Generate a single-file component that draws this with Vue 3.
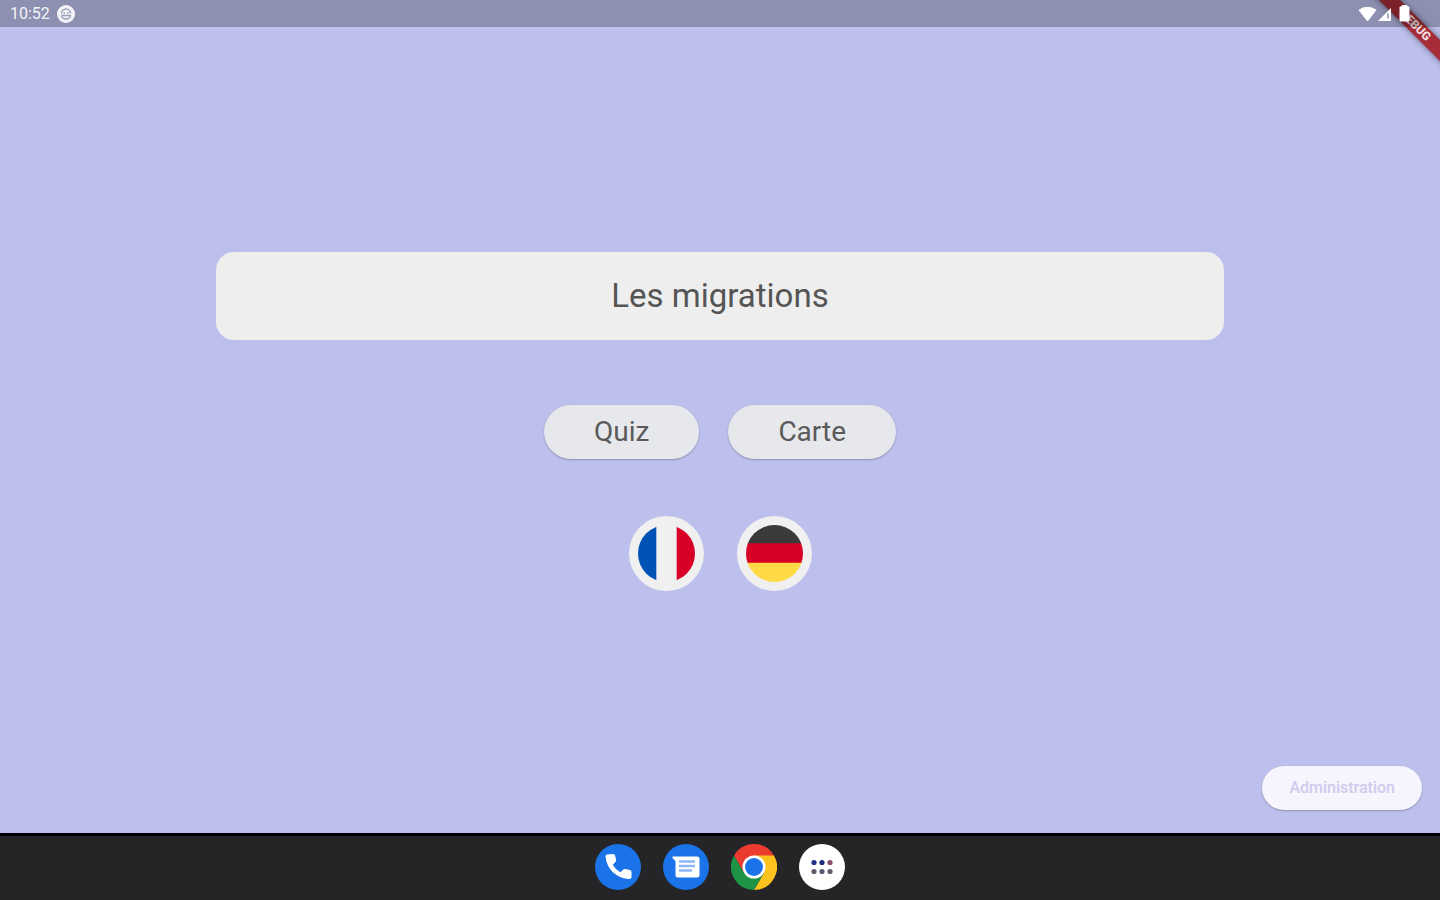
<template>
    <div class="screen">
        <header class="status-bar">
            <div class="status-group">
                <span class="clock">10:52</span>
                <svg class="face" viewBox="0 0 18 18" aria-hidden="true">
                    <circle cx="9" cy="9" r="9" fill="#f4f4f8" />
                    <path d="M4.5 8.5a4.5 4.5 0 0 1 9 0M4.5 10.5h9a4.5 3.5 0 0 1-9 0" fill="none" stroke="#9b9dbb" stroke-width="1.4" />
                    <path d="M6.5 8h1.5M10 8h1.5" stroke="#9b9dbb" stroke-width="1.4" />
                </svg>
            </div>
            <svg class="signals" viewBox="0 0 54 20" aria-hidden="true">
                <path d="M1 6Q9.500 .5 18 6L9.500 17z" fill="#fff" stroke="#fff" stroke-linejoin="round" />
                <path d="M20 17L33 4v13z" fill="#fff" />
                <path d="M30 9.500v5" stroke="#8e90b2" stroke-width="1.5" />
                <path d="M42 3h2V1.500h5V3h2v14h-9z" fill="#fff" stroke="#fff" stroke-linejoin="round" />
            </svg>
        </header>
        <div class="banner"><span>DEBUG</span></div>

        <main class="home">
            <h1 class="title">Les migrations</h1>
            <nav class="actions">
                <button v-for="action in actions" :key="action" type="button" class="action">{{ action }}</button>
            </nav>
            <div class="languages">
                <button type="button" class="flag" aria-label="Français" @click="lang = 'fr'">
                    <svg viewBox="0 0 56 56">
                        <clipPath id="round-fr"><circle cx="28" cy="28" r="28" /></clipPath>
                        <g clip-path="url(#round-fr)">
                            <path d="M0 0h56v56H0z" fill="#f0f0f0" />
                            <path d="M0 0h18v56H0z" fill="#0052b4" />
                            <path d="M38 0h18v56H38z" fill="#d80027" />
                        </g>
                    </svg>
                </button>
                <button type="button" class="flag" aria-label="Deutsch" @click="lang = 'de'">
                    <svg viewBox="0 0 56 56">
                        <clipPath id="round-de"><circle cx="28" cy="28" r="28" /></clipPath>
                        <g clip-path="url(#round-de)">
                            <path d="M0 0h56v19H0z" fill="#3a3a3a" />
                            <path d="M0 18h56v20H0z" fill="#d80027" />
                            <path d="M0 37h56v19H0z" fill="#ffda44" />
                        </g>
                    </svg>
                </button>
            </div>
            <button type="button" class="admin">Administration</button>
        </main>

        <footer class="dock">
            <button type="button" class="app" aria-label="Phone">
                <svg viewBox="0 0 46 46">
                    <circle cx="23" cy="23" r="23" fill="#1a73e8" />
                    <path d="M12 10.500q-1.500 0-1.500 2C11.500 24.500 21 34 33 35q3.500 0 3.500-2v-5q0-1.500-1.500-2l-5-1q-1.200-.2-2 .7l-2.600 2.600q-5-2.600-7.600-7.600l2.600-2.600q1-.9.7-2l-1-4.500q-.4-1.600-2-1.600z" fill="#fff" />
                </svg>
            </button>
            <button type="button" class="app" aria-label="Messages">
                <svg viewBox="0 0 46 46">
                    <circle cx="23" cy="23" r="23" fill="#1a73e8" />
                    <path d="M10 12.500h24q2.500 0 2.500 2.500v16q0 2.500-2.500 2.500H15q-2.500 0-2.500-2.500V17l-3-3q-.5-1.500.5-1.500z" fill="#fff" />
                    <path d="M16 17.500h16M16 22h16M16 26.500h13" stroke="#8fb6f2" stroke-width="2.600" />
                </svg>
            </button>
            <button type="button" class="app" aria-label="Chrome">
                <svg viewBox="0 0 46 46">
                    <path d="M23 23L3.080 11.500A23 23 0 0 1 42.920 11.500z" fill="#ea3b2e" />
                    <path d="M23 11.500h19.920A23 23 0 0 1 23 46l10-17.300z" fill="#fcc31e" />
                    <path d="M3.080 11.500A23 23 0 0 0 23 46l10-17.300-10 3-10-3z" fill="#1e9447" />
                    <path d="M3.080 11.500h39.840H23L13 28.700z" fill="#ea3b2e" />
                    <circle cx="23" cy="23" r="11.500" fill="#fff" />
                    <circle cx="23" cy="23" r="9" fill="#1a73e8" />
                </svg>
            </button>
            <button type="button" class="app" aria-label="Apps">
                <svg viewBox="0 0 46 46">
                    <circle cx="23" cy="23" r="23" fill="#fff" />
                    <circle v-for="dot in dots" :key="dot.color + dot.x" :cx="dot.x" :cy="dot.y" r="2.600" :fill="dot.color" />
                </svg>
            </button>
        </footer>
    </div>
</template>

<script setup>
import { ref } from 'vue'

const lang = ref('fr')
const actions = ['Quiz', 'Carte']

const dots = [
    { x: 15, y: 18.5, color: '#1f2f86' },
    { x: 23, y: 18.5, color: '#1c2a80' },
    { x: 31, y: 18.5, color: '#8c4a6c' },
    { x: 15, y: 27.5, color: '#5d5b6c' },
    { x: 23, y: 27.5, color: '#5a5a70' },
    { x: 31, y: 27.5, color: '#625d6d' }
]
</script>

<style>
body {
    margin: 0;
}
</style>

<style scoped>
.screen {
    position: relative;
    display: flex;
    flex-direction: column;
    min-height: 100vh;
    overflow: hidden;
    background: #bdc0ed;
    font-family: Roboto, "Liberation Sans", sans-serif;
}

button {
    border: 0;
    padding: 0;
    font-family: inherit;
    cursor: pointer;
}

svg {
    display: block;
}

/* translucent, so the banner shows through it */
.status-bar {
    position: relative;
    z-index: 2;
    display: flex;
    align-items: center;
    justify-content: space-between;
    height: 27px;
    padding: 0 28px 0 10px;
    background: rgba(0, 0, 0, 0.25);
}

.status-group {
    display: flex;
    align-items: center;
    gap: 7px;
}

.clock {
    font-size: 16px;
    line-height: 20px;
    color: #f4f4f8;
}

.face {
    width: 18px;
    height: 18px;
}

.signals {
    width: 54px;
    height: 20px;
}

.banner {
    position: absolute;
    z-index: 1;
    top: 18px;
    right: -30px;
    width: 110px;
    height: 15px;
    transform: rotate(45deg);
    background: #a52c38;
    box-shadow: 0 0 6px rgba(0, 0, 0, 0.5);
    color: #f2dcdf;
    font-size: 12px;
    font-weight: 900;
    line-height: 15px;
    text-align: center;
}

.home {
    position: relative;
    flex: 1;
    display: flex;
    flex-direction: column;
    align-items: center;
    justify-content: center;
    padding-bottom: 18px;
}

.title {
    width: 70%;
    margin: 0 0 65px;
    padding: 24px 0;
    border-radius: 18px;
    background: #eee;
    color: #555;
    font-size: 33px;
    font-weight: 400;
    line-height: 40px;
    text-align: center;
}

.actions {
    display: flex;
    gap: 29px;
    margin-bottom: 57px;
}

.action {
    padding: 7px 50px;
    border-radius: 27px;
    background: #e6e8ec;
    box-shadow: 0 1px 2px rgba(0, 0, 0, 0.25);
    color: #5a5a5a;
    font-size: 28px;
    font-weight: 400;
    line-height: 40px;
}

.languages {
    display: flex;
    gap: 33px;
}

.flag {
    padding: 9px;
    border-radius: 50%;
    background: #f0f0f0;
}

.flag svg {
    width: 57px;
    height: 57px;
}

.admin {
    position: absolute;
    right: 18px;
    bottom: 23px;
    padding: 12px 27px;
    border-radius: 22px;
    background: #f6f4fc;
    box-shadow: 0 1px 2px rgba(0, 0, 0, 0.25);
    color: #cfcbee;
    font-size: 16px;
    font-weight: 500;
    line-height: 20px;
}

.dock {
    display: flex;
    justify-content: center;
    gap: 22px;
    padding: 8px 0 10px;
    border-top: 3px solid #000;
    background: #252528;
}

.app {
    border-radius: 50%;
    background: transparent;
}

.app svg {
    width: 46px;
    height: 46px;
}
</style>
